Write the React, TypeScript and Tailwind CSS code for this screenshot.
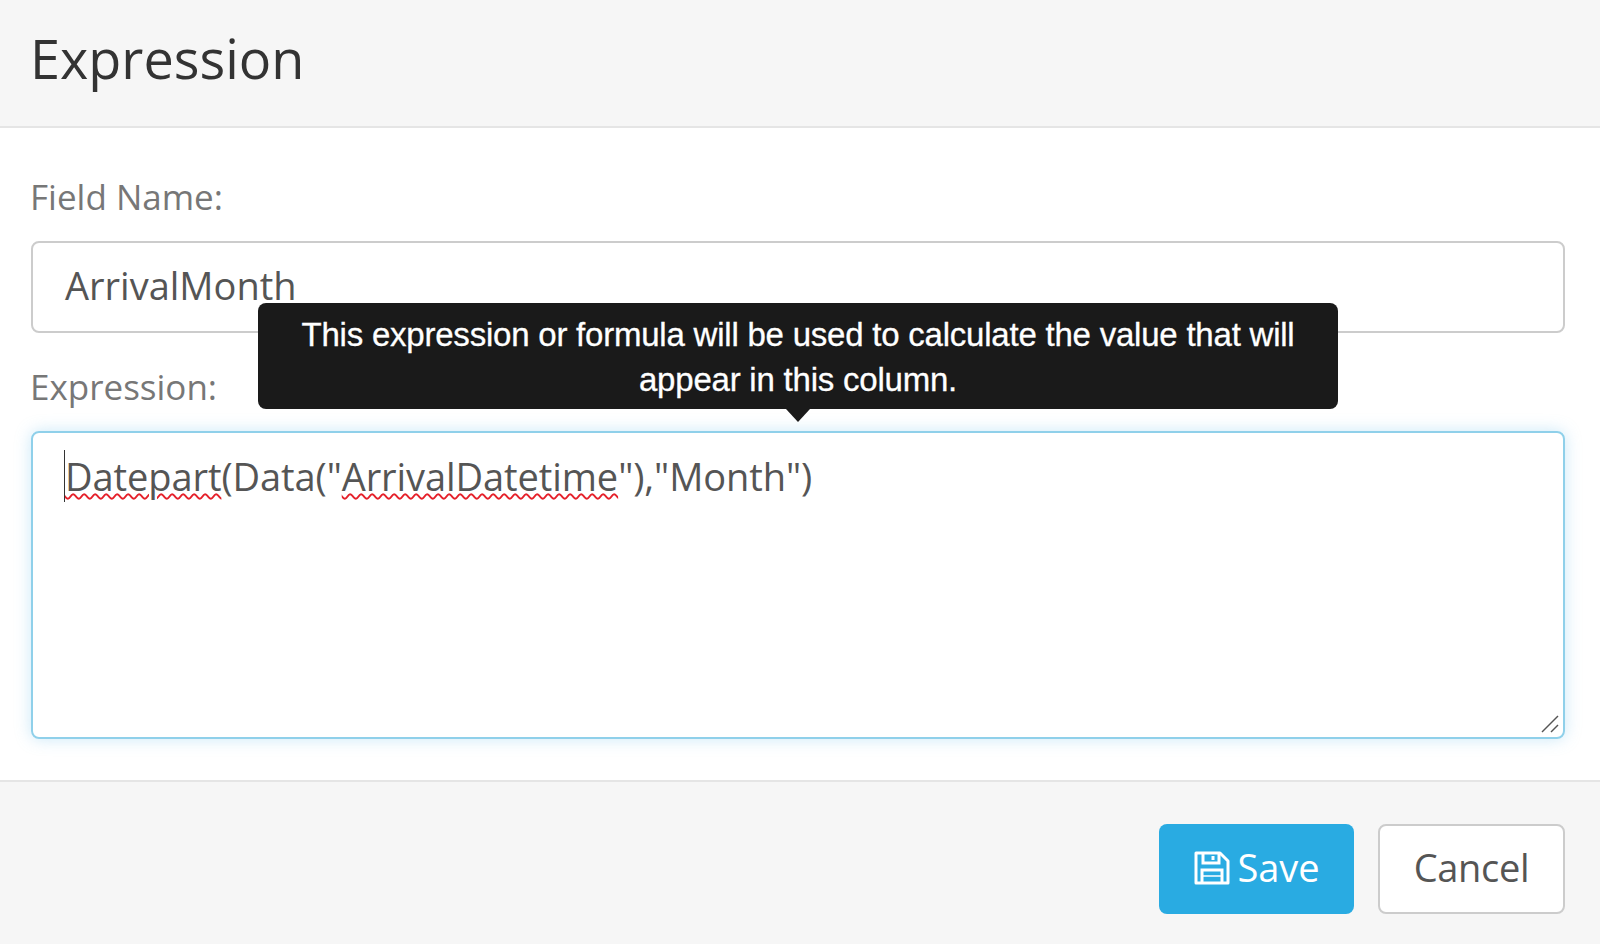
function SaveIcon() {
  return (
    <svg className="h-[34px] w-[36px]" viewBox="0 0 36 34" fill="none" stroke="white" strokeWidth="3">
      <path d="M2 2H26L34 10V32H2Z" strokeLinejoin="round" />
      <path d="M9 2V12H25V2" />
      <path d="M19 5V9" />
      <path d="M8 32V19H28V32" />
      <path d="M8 25H28" strokeWidth="1.5" />
    </svg>
  );
}

export default function App() {
  return (
    <div className="flex h-[944px] w-[1600px] flex-col overflow-hidden bg-white font-['Open_Sans',sans-serif]">
      <div className="flex h-[128px] shrink-0 items-center border-b-2 border-[#e5e5e5] bg-[#f6f6f6] pb-[10px] pl-[30px]">
        <h1 className="text-[54px] leading-none text-[#333333]">Expression</h1>
      </div>

      <div className="relative flex-1 pl-[31px] pr-[35px]">
        <label className="mt-[46px] -ml-[1px] block text-[35px] leading-[46px] text-[#777777]">Field Name:</label>
        <div className="mt-[21px] flex h-[92px] items-center rounded-lg border-2 border-[#cccccc] pb-[4px] pl-[32px] text-[38px] text-[#555555]">
          ArrivalMonth
        </div>
        <label className="mt-[31px] -ml-[1px] block text-[35px] leading-[46px] text-[#777777]">Expression:</label>
        <div className="relative mt-[21px] h-[308px] rounded-lg border-2 border-[#8fd0ea] pl-[32px] pt-[17px] text-[38px] leading-[52px] tracking-[-0.08px] text-[#555555] shadow-[0_0_16px_rgba(102,190,235,0.35)]">
          <span className="-ml-[1px] border-l border-[#333333]">
            <span className="underline decoration-[#e5202a] decoration-wavy decoration-[1.5px] underline-offset-[2px]">Datepart</span>
          </span>
          (Data("
          <span className="underline decoration-[#e5202a] decoration-wavy decoration-[1.5px] underline-offset-[2px]">ArrivalDatetime</span>
          "),"Month")
          <svg className="absolute bottom-[3px] right-[3px] h-[20px] w-[20px]" viewBox="0 0 20 20" fill="none" stroke="#555555" strokeWidth="1.5">
            <path d="M2 18 18 2" />
            <path d="M11 18 18 11" />
          </svg>
        </div>

        <div className="absolute left-[258px] top-[175px] w-[1080px] rounded-lg bg-[#1a1a1a] px-[30px] pb-[7px] pt-[9px] text-center font-['Liberation_Sans',sans-serif] text-[33px] leading-[45px] tracking-[-0.22px] text-white [-webkit-text-stroke:0.3px_white]">
          This expression or formula will be used to calculate the value that will appear in this column.
          <div className="absolute left-1/2 top-full h-0 w-0 -translate-x-1/2 border-x-[12px] border-t-[13px] border-x-transparent border-t-[#1a1a1a]" />
        </div>
      </div>

      <div className="flex h-[164px] shrink-0 items-start justify-end gap-[24px] border-t-2 border-[#e5e5e5] bg-[#f6f6f6] pr-[35px] pt-[42px]">
        <button className="flex h-[90px] w-[195px] items-center justify-center gap-[8px] rounded-lg bg-[#29abe2] pb-[3px] text-[38px] tracking-[-0.1px] text-white">
          <SaveIcon />
          Save
        </button>
        <button className="h-[90px] w-[187px] rounded-lg border-2 border-[#cccccc] bg-white pb-[3px] text-[38px] tracking-[-0.3px] text-[#555555]">
          Cancel
        </button>
      </div>
    </div>
  );
}
